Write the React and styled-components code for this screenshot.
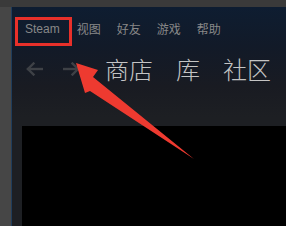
import React from 'react';
import styled, { createGlobalStyle } from 'styled-components';

const GlobalStyle = createGlobalStyle`
    html, body {
        margin: 0;
        padding: 0;
        background: #454545;
    }
    #root {
        width: 286px;
        height: 226px;
        overflow: hidden;
    }
`;

const Desktop = styled.div`
    position: relative;
    width: 286px;
    height: 226px;
    box-sizing: border-box;
    padding: 7px 0 0 11px;
    background: linear-gradient(#3a3a3a 0 7px, #464646 7px);
    overflow: hidden;
`;

const Window = styled.div`
    display: flex;
    flex-direction: column;
    height: 100%;
    border-left: 1px solid #1f3d5c;
    background: linear-gradient(180deg, #0e1d31 0px, #121a28 40px, #191b22 80px, #1d1f23 110px);
`;

const MenuBar = styled.div`
    display: flex;
    align-items: center;
    padding: 14px 0 0 13px;
    gap: 16px;
`;

const MenuItem = styled.span`
    font-family: ${p => p.$latin ? '"Liberation Sans", Arial' : '"Noto Sans CJK SC"'}, sans-serif;
    font-size: 12px;
    line-height: 16px;
    color: #888;
    margin-right: ${p => p.$latin ? '1px' : '0'};
`;

const NavRow = styled.div`
    display: flex;
    align-items: center;
    margin-top: 16px;
    padding-left: 14px;
    height: 32px;
`;

const ArrowBtn = styled.span`
    display: flex;
    width: 17px;
    height: 14px;
    margin-right: ${p => p.$last ? '25px' : '20px'};
`;

const Tab = styled.span`
    font-family: "Noto Sans CJK SC", sans-serif;
    font-weight: 300;
    font-size: 24px;
    line-height: 32px;
    color: #c4c4c4;
    margin-right: 23px;
    white-space: nowrap;
`;

const Content = styled.div`
    flex: 1;
    margin: 41px 0 0 10px;
    background: #000;
`;

const Overlay = styled.svg`
    position: absolute;
    left: 0;
    top: 0;
    pointer-events: none;
`;

const NavArrow = ({ dir }) => (
    <svg width="17" height="14" viewBox="0 0 17 14">
        <g fill="none" stroke="#3e4146" strokeWidth="2.4" strokeLinecap="square">
            {dir === 'back' ? (
                <>
                    <path d="M2 7 H16" />
                    <path d="M7.5 1.5 L2 7 L7.5 12.5" />
                </>
            ) : (
                <>
                    <path d="M1 7 H15" />
                    <path d="M9.5 1.5 L15 7 L9.5 12.5" />
                </>
            )}
        </g>
    </svg>
);

const menu = ['视图', '好友', '游戏', '帮助'];
const tabs = ['商店', '库', '社区'];

export default function App() {
    return (
        <>
            <GlobalStyle />
            <Desktop>
                <Window>
                    <MenuBar>
                        <MenuItem $latin>Steam</MenuItem>
                        {menu.map(m => <MenuItem key={m}>{m}</MenuItem>)}
                    </MenuBar>
                    <NavRow>
                        <ArrowBtn><NavArrow dir="back" /></ArrowBtn>
                        <ArrowBtn $last><NavArrow dir="fwd" /></ArrowBtn>
                        {tabs.map(t => <Tab key={t}>{t}</Tab>)}
                    </NavRow>
                    <Content />
                </Window>
                <Overlay width="286" height="226" viewBox="0 0 286 226">
                    <rect x="16.5" y="18.5" width="54" height="26" fill="none" stroke="#e8302a" strokeWidth="3" />
                    <polygon
                        points="76,63 98,70 93,77 194,159 90,91 85,93"
                        fill="#ee3a30"
                    />
                </Overlay>
            </Desktop>
        </>
    );
}
